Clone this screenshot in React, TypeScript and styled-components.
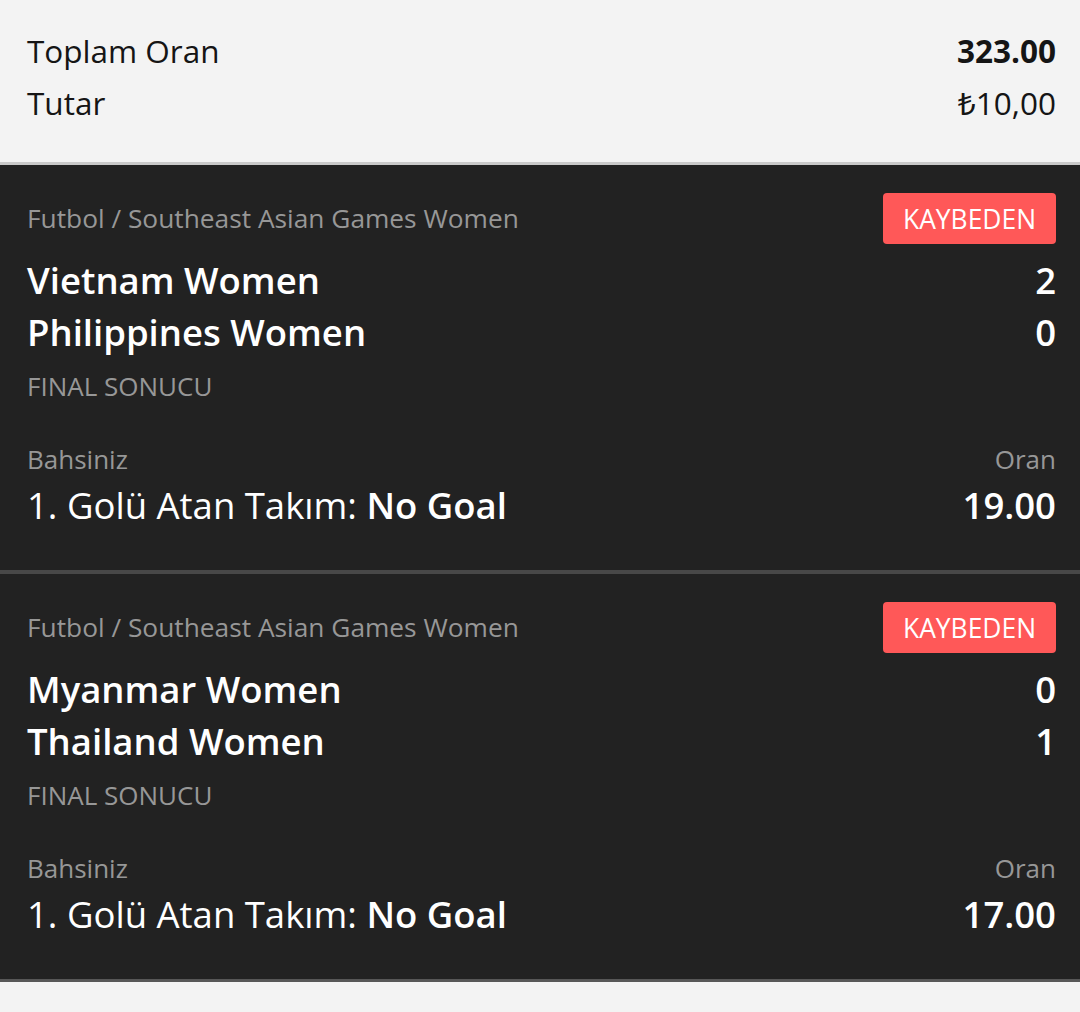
import React from "react";
import styled, { createGlobalStyle } from "styled-components";

const Global = createGlobalStyle`
  html, body { margin: 0; padding: 0; background: #f3f3f3; }
  body { font-family: "Open Sans", "Noto Sans", sans-serif; -webkit-font-smoothing: antialiased; }
  * { box-sizing: border-box; }
`;

const Page = styled.div`
  width: 1080px;
  min-height: 1012px;
  background: #f3f3f3;
`;

const Summary = styled.section`
  padding: 25px 24px 33px 27px;
  border-bottom: 3px solid #c9c9c9;
`;

const SummaryRow = styled.div`
  display: flex;
  justify-content: space-between;
  align-items: center;
  height: 52px;
  font-size: 31.5px;
  line-height: 52px;
  color: #151515;
`;

const SummaryValue = styled.span<{ $bold?: boolean }>`
  font-weight: ${(p) => (p.$bold ? 700 : 400)};
`;

const List = styled.div`
  background: #222222;
  border-bottom: 3px solid #575757;
`;

const Card = styled.article`
  padding: 28px 24px 42px 27px;
  & + & {
    border-top: 4px solid #484848;
  }
`;

const Header = styled.div`
  display: flex;
  justify-content: space-between;
  align-items: center;
  height: 51px;
  margin-bottom: 10px;
`;

const Category = styled.span`
  font-size: 26.3px;
  color: #979797;
  line-height: 51px;
`;

const Badge = styled.span`
  display: inline-flex;
  align-items: center;
  justify-content: center;
  height: 51px;
  padding: 0 20px;
  background: #ff5858;
  border-radius: 4px;
  color: #ffffff;
  font-size: 26.4px;
  font-weight: 500;
  text-transform: uppercase;
`;

const TeamRow = styled.div`
  display: flex;
  justify-content: space-between;
  font-size: 36.5px;
  line-height: 52px;
  font-weight: 600;
  color: #ffffff;
`;

const Status = styled.div`
  margin-top: 10px;
  font-size: 26px;
  line-height: 36px;
  color: #979797;
  text-transform: uppercase;
`;

const LabelRow = styled.div`
  display: flex;
  justify-content: space-between;
  margin-top: 37px;
  font-size: 26px;
  line-height: 36px;
  color: #979797;
`;

const BetRow = styled.div`
  display: flex;
  justify-content: space-between;
  margin-top: 5px;
  font-size: 36.5px;
  line-height: 46px;
  color: #ffffff;
`;

const Strong = styled.span`
  font-weight: 600;
`;

type Bet = {
  category: string;
  home: string;
  away: string;
  homeScore: number;
  awayScore: number;
  market: string;
  pick: string;
  odds: string;
};

const bets: Bet[] = [
  {
    category: "Futbol / Southeast Asian Games Women",
    home: "Vietnam Women",
    away: "Philippines Women",
    homeScore: 2,
    awayScore: 0,
    market: "1. Golü Atan Takım:",
    pick: "No Goal",
    odds: "19.00",
  },
  {
    category: "Futbol / Southeast Asian Games Women",
    home: "Myanmar Women",
    away: "Thailand Women",
    homeScore: 0,
    awayScore: 1,
    market: "1. Golü Atan Takım:",
    pick: "No Goal",
    odds: "17.00",
  },
];

export default function App() {
  return (
    <Page>
      <Global />
      <Summary>
        <SummaryRow>
          <span>Toplam Oran</span>
          <SummaryValue $bold>323.00</SummaryValue>
        </SummaryRow>
        <SummaryRow>
          <span>Tutar</span>
          <SummaryValue>₺10,00</SummaryValue>
        </SummaryRow>
      </Summary>
      <List>
        {bets.map((b, i) => (
          <Card key={i}>
            <Header>
              <Category>{b.category}</Category>
              <Badge>Kaybeden</Badge>
            </Header>
            <TeamRow>
              <span>{b.home}</span>
              <span>{b.homeScore}</span>
            </TeamRow>
            <TeamRow>
              <span>{b.away}</span>
              <span>{b.awayScore}</span>
            </TeamRow>
            <Status>Final Sonucu</Status>
            <LabelRow>
              <span>Bahsiniz</span>
              <span>Oran</span>
            </LabelRow>
            <BetRow>
              <span>
                {b.market} <Strong>{b.pick}</Strong>
              </span>
              <Strong>{b.odds}</Strong>
            </BetRow>
          </Card>
        ))}
      </List>
    </Page>
  );
}
